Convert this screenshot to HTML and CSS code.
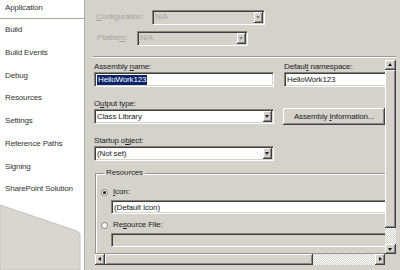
FILE: index.html
```html
<!DOCTYPE html>
<html lang="en">
<head>
    <meta charset="UTF-8">
    <title>Project Properties - Application</title>
    <link rel="stylesheet" href="styles.css">
</head>
<body>
<div class="window">
    <nav class="tabs">
        <div class="tab active">Application</div>
        <div class="tab">Build</div>
        <div class="tab">Build Events</div>
        <div class="tab">Debug</div>
        <div class="tab">Resources</div>
        <div class="tab">Settings</div>
        <div class="tab">Reference Paths</div>
        <div class="tab">Signing</div>
        <div class="tab">SharePoint Solution</div>
        <div class="tabs-end">
            <svg width="84" height="69" viewBox="0 0 84 69">
                <polygon points="0,4 77,30 80,33 80,69 0,69" fill="#d9d6d1" stroke="#c4c1bb" stroke-width="1"/>
            </svg>
        </div>
    </nav>

    <main class="page">
        <div class="config">
            <div class="config-row row-cfg">
                <span class="lbl dim"><u>C</u>onfiguration:</span>
                <div class="combo disabled"><span class="val">N/A</span><i class="drop"></i></div>
            </div>
            <div class="config-row row-plat">
                <span class="lbl dim">Platfor<u>m</u>:</span>
                <div class="combo disabled"><span class="val">N/A</span><i class="drop"></i></div>
            </div>
        </div>

        <div class="sep"></div>

        <div class="scroller">
            <div class="view">
                <div class="cols">
                    <div class="col-left">
                        <div class="field-group">
                            <span class="lbl">Assembly <u>n</u>ame:</span>
                            <div class="text"><span class="sel">HelloWork123</span></div>
                        </div>
                        <div class="field-group">
                            <span class="lbl">O<u>u</u>tput type:</span>
                            <div class="combo"><span class="val">Class Library</span><i class="drop"></i></div>
                        </div>
                        <div class="field-group">
                            <span class="lbl">Startup o<u>b</u>ject:</span>
                            <div class="combo"><span class="val">(Not set)</span><i class="drop"></i></div>
                        </div>
                    </div>
                    <div class="col-right">
                        <div class="field-group">
                            <span class="lbl">Defaul<u>t</u> namespace:</span>
                            <div class="text"><span>HelloWork123</span></div>
                        </div>
                        <button class="btn">Assembly <u>I</u>nformation...</button>
                    </div>
                </div>

                <fieldset class="group">
                    <legend>Resources</legend>
                    <div class="radio-row">
                        <i class="radio checked"></i>
                        <span class="lbl"><u>I</u>con:</span>
                    </div>
                    <div class="text wide"><span>(Default Icon)</span></div>
                    <div class="radio-row">
                        <i class="radio"></i>
                        <span class="lbl">Re<u>s</u>ource File:</span>
                    </div>
                    <div class="text wide off"></div>
                </fieldset>
            </div>

            <div class="vbar">
                <div class="sbtn"><i class="arr up"></i></div>
                <div class="thumb v"></div>
                <div class="track"></div>
                <div class="sbtn"><i class="arr down"></i></div>
            </div>
            <div class="hbar">
                <div class="sbtn"><i class="arr left"></i></div>
                <div class="thumb h"></div>
                <div class="track"></div>
                <div class="sbtn"><i class="arr right"></i></div>
            </div>
        </div>
    </main>
</div>
</body>
</html>
```

FILE: styles.css
```css
body {
    margin: 0;
    font-family: "Liberation Sans", Arial, sans-serif;
    font-size: 8px;
    letter-spacing: -0.15px;
    color: #222;
    background: #d5d2cc;
}
.window {
    display: flex;
    width: 400px;
    height: 270px;
    overflow: hidden;
}

/* left tab list */
.tabs {
    width: 84px;
    flex: none;
    display: flex;
    flex-direction: column;
    background: #fff;
}
.tab {
    height: 22.75px;
    line-height: 22.75px;
    padding-left: 5px;
    color: #333;
    white-space: nowrap;
}
.tab.active {
    height: 18px;
    line-height: 16px;
    border-bottom: 1px solid #a9a6a0;
}
.tabs-end {
    flex: 1;
    overflow: hidden;
}
.tabs-end svg {
    display: block;
}

/* right page */
.page {
    flex: 1;
    min-width: 0;
    display: flex;
    flex-direction: column;
    border-left: 1px solid #aeaba5;
}
.config {
    padding-top: 9px;
    display: flex;
    flex-direction: column;
    gap: 5px;
}
.config-row {
    display: flex;
    align-items: center;
    height: 16px;
}
.row-cfg { padding-left: 11px; }
.row-cfg .lbl { width: 56px; }
.row-cfg .combo { width: 113px; }
.row-plat { padding-left: 12px; }
.row-plat .lbl { width: 40px; }
.row-plat .combo { width: 111px; }

.lbl {
    line-height: 10px;
    white-space: nowrap;
}
.dim { color: #a4a29d; }

.sep {
    margin: 10px 4px 0 8px;
    height: 0;
    border-top: 1px solid #9c9993;
    border-bottom: 1px solid #fff;
}

/* sunken controls */
.text, .combo {
    box-sizing: border-box;
    height: 15px;
    display: flex;
    align-items: center;
    background: #fff;
    border: 1px solid;
    border-color: #858379 #fff #fff #858379;
    box-shadow: inset 1px 1px #3f3f3f, inset -1px -1px #d5d2cc;
    padding: 0 2px;
    white-space: nowrap;
    overflow: hidden;
}
.combo {
    justify-content: space-between;
    padding-right: 1px;
}
.combo.disabled {
    background: #d5d2cc;
    color: #a4a29d;
}
.val { line-height: 10px; }
.drop {
    width: 9px;
    height: 11px;
    flex: none;
    position: relative;
    background: #d5d2cc;
    box-shadow: inset -1px -1px #404040, inset 1px 1px #fff, inset -2px -2px #888;
}
.drop::after {
    content: "";
    position: absolute;
    left: 2px;
    top: 4px;
    border: 2px solid transparent;
    border-top: 3px solid #222;
    border-bottom: 0;
}
.disabled .drop::after { border-top-color: #8d8b86; }

.sel {
    background: #0a246a;
    color: #fff;
    line-height: 10px;
    padding: 0 1px;
}

/* scrolled panel */
.scroller {
    margin: 0 4px 5px 9px;
    flex: 1;
    display: grid;
    grid-template-columns: minmax(0, 1fr) 11px;
    grid-template-rows: minmax(0, 1fr) 11px;
    min-height: 0;
}
.view {
    grid-area: 1 / 1;
    overflow: hidden;
    padding-top: 4px;
}
.cols {
    display: flex;
    gap: 10px;
}
.col-left {
    width: 180px;
    flex: none;
    display: flex;
    flex-direction: column;
    gap: 12px;
}
.col-right {
    flex: 1;
    display: flex;
    flex-direction: column;
    gap: 21px;
}
.field-group {
    display: flex;
    flex-direction: column;
}
.field-group .lbl {
    height: 10px;
}
.col-right .text {
    width: 110px;
}
.btn {
    margin: 0 0 0 -1px;
    width: 102px;
    height: 17px;
    padding: 0;
    font: inherit;
    letter-spacing: inherit;
    color: #222;
    background: #d5d2cc;
    border: none;
    box-shadow: inset -1px -1px #404040, inset 1px 1px #fff, inset -2px -2px #888;
    text-align: center;
}

/* group box */
.group {
    margin: 7px 0 0 1px;
    padding: 9px 0 0 5px;
    border: 1px solid #98958f;
    box-shadow: inset 1px 1px #fff;
    width: 320px;
}
.group legend {
    padding: 0 2px;
    margin-left: 3px;
    line-height: 10px;
}
.radio-row {
    display: flex;
    align-items: center;
    gap: 5px;
    height: 10px;
}
.radio {
    width: 7px;
    height: 7px;
    border-radius: 50%;
    background: #fff;
    border: 1px solid #7d7b76;
    box-sizing: border-box;
    display: flex;
    align-items: center;
    justify-content: center;
}
.radio.checked::after {
    content: "";
    width: 3px;
    height: 3px;
    border-radius: 50%;
    background: #111;
}
.text.wide {
    margin: 3px 0 6px 10px;
    height: 14px;
}
.text.off {
    background: #d5d2cc;
}

/* scrollbars */
.vbar, .hbar {
    display: flex;
    background: #d5d2cc;
}
.vbar {
    grid-area: 1 / 2;
    flex-direction: column;
    padding-top: 2px;
}
.hbar {
    grid-area: 2 / 1;
    padding-left: 1px;
}
.sbtn {
    width: 11px;
    height: 11px;
    flex: none;
    position: relative;
    box-shadow: inset -1px -1px #404040, inset 1px 1px #fff, inset -2px -2px #888;
}
.vbar .sbtn { height: 10px; }
.hbar .sbtn { width: 10px; }
.thumb {
    flex: none;
    box-shadow: inset -1px -1px #404040, inset 1px 1px #fff, inset -2px -2px #888;
}
.thumb.v { height: 158px; }
.thumb.h { width: 208px; }
.track {
    flex: 1;
    background: repeating-conic-gradient(#fff 0 25%, #d5d2cc 0 50%) 0 0 / 2px 2px;
}
.arr {
    position: absolute;
    width: 0;
    height: 0;
    border: 2px solid transparent;
}
.arr.up { left: 3px; top: 3px; border-bottom: 3px solid #111; border-top: 0; }
.arr.down { left: 3px; top: 4px; border-top: 3px solid #111; border-bottom: 0; }
.arr.left { left: 3px; top: 3px; border-right: 3px solid #111; border-left: 0; }
.arr.right { left: 4px; top: 3px; border-left: 3px solid #111; border-right: 0; }
```
